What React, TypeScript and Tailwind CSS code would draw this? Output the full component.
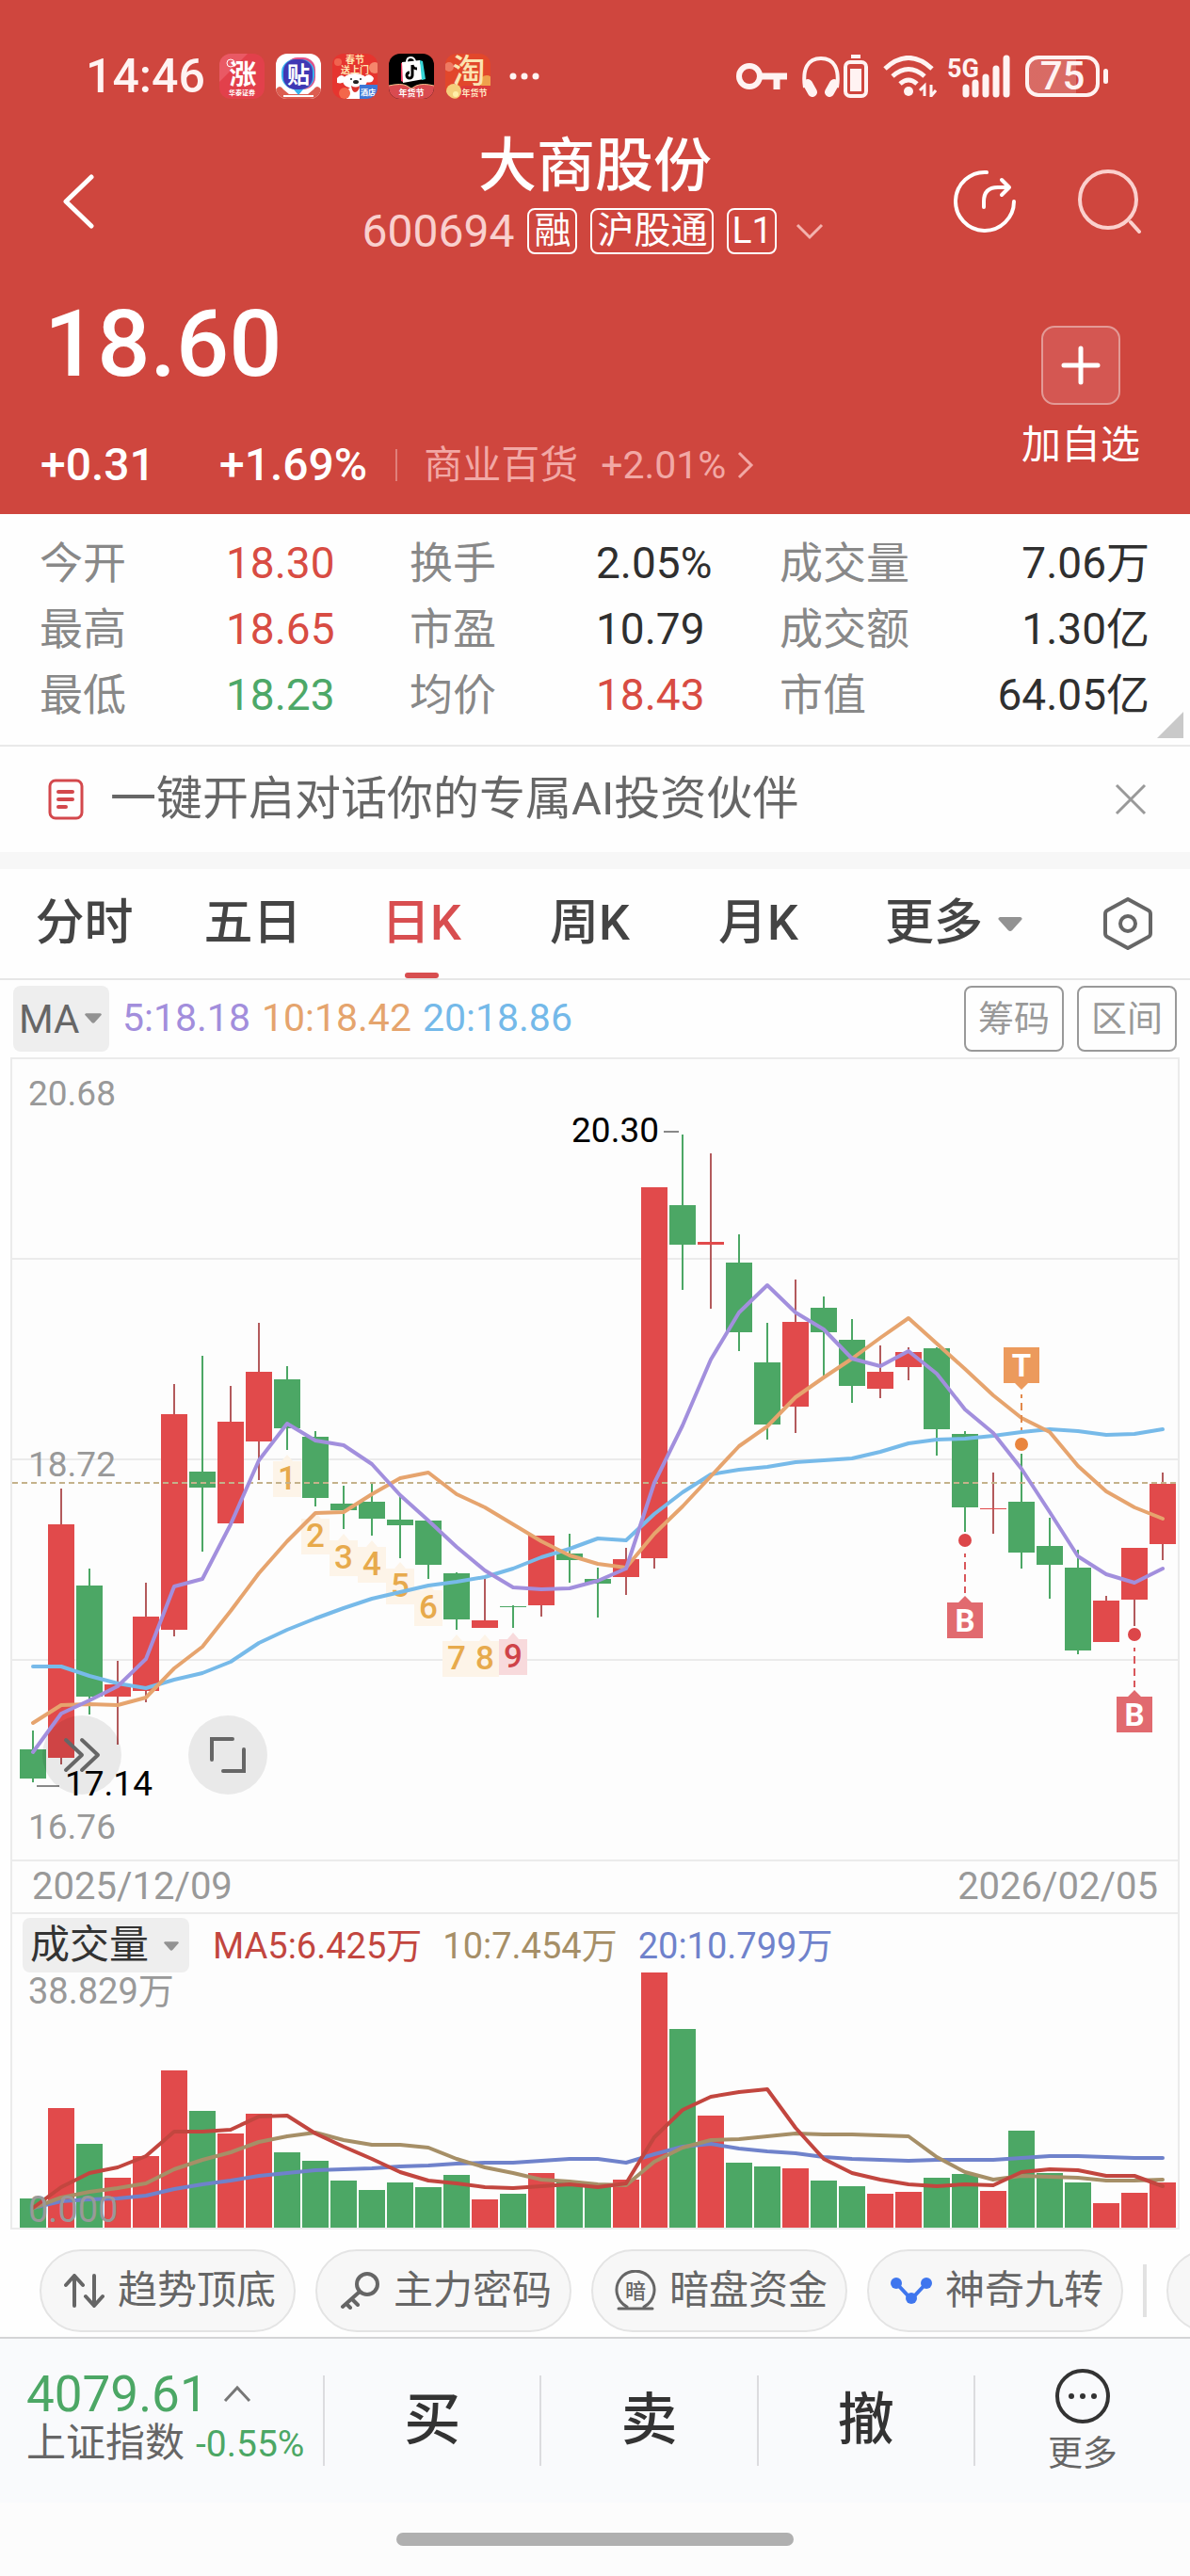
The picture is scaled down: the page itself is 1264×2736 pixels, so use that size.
import React from 'react';

type Candle = [up: 0 | 1, high: number, top: number, bottom: number, low: number];

const X0 = 35;
const STEP = 30;
const cx = (i: number) => X0 + STEP * i;
const RED = '#e14a4b';
const GREEN = '#4ca765';

const candles: Candle[] = [
  [0, 1838, 1858, 1889, 1893], [1, 1581, 1619, 1867, 1874], [0, 1666, 1684, 1802, 1821], [1, 1764, 1789, 1802, 1853],
  [1, 1681, 1717, 1796, 1808], [1, 1470, 1502, 1731, 1738], [0, 1440, 1563, 1580, 1648], [1, 1472, 1510, 1618, 1618],
  [1, 1405, 1457, 1531, 1572], [0, 1451, 1465, 1517, 1540], [0, 1520, 1526, 1591, 1600], [0, 1578, 1597, 1604, 1624],
  [0, 1576, 1595, 1613, 1631], [0, 1588, 1614, 1620, 1655], [0, 1615, 1615, 1662, 1677], [0, 1670, 1671, 1720, 1731],
  [1, 1677, 1721, 1729, 1729], [0, 1705, 1706, 1707, 1729], [1, 1631, 1631, 1705, 1717], [0, 1629, 1650, 1657, 1681],
  [0, 1665, 1677, 1682, 1718], [1, 1644, 1656, 1675, 1694], [1, 1261, 1261, 1655, 1666], [0, 1205, 1280, 1322, 1370],
  [1, 1225, 1319, 1322, 1390], [0, 1311, 1341, 1415, 1435], [0, 1405, 1447, 1513, 1529], [1, 1359, 1404, 1494, 1522],
  [0, 1377, 1389, 1415, 1462], [0, 1401, 1423, 1472, 1490], [1, 1429, 1457, 1475, 1485], [1, 1431, 1436, 1452, 1466],
  [0, 1431, 1432, 1518, 1546], [0, 1520, 1523, 1601, 1627], [1, 1564, 1602, 1603, 1629], [0, 1544, 1595, 1649, 1666],
  [0, 1612, 1642, 1662, 1698], [0, 1646, 1665, 1753, 1757], [1, 1695, 1700, 1744, 1744], [1, 1644, 1644, 1699, 1727],
  [1, 1564, 1576, 1640, 1657],
];

const ma5 = [1861, 1820, 1806, 1791, 1762, 1685, 1677, 1619, 1551, 1512, 1530, 1535, 1555, 1588, 1615, 1643, 1668, 1686, 1688, 1687, 1679, 1666, 1575, 1514, 1444, 1394, 1365, 1394, 1412, 1443, 1451, 1435, 1459, 1497, 1522, 1560, 1606, 1653, 1672, 1681, 1666];
const ma10 = [1830, 1811, 1810, 1811, 1803, 1772, 1749, 1711, 1671, 1637, 1607, 1606, 1587, 1570, 1564, 1587, 1601, 1619, 1637, 1652, 1661, 1665, 1629, 1600, 1568, 1536, 1515, 1484, 1463, 1443, 1421, 1400, 1427, 1454, 1482, 1506, 1521, 1557, 1584, 1601, 1613];
const ma20 = [1770, 1770, 1780, 1788, 1793, 1784, 1777, 1765, 1745, 1731, 1719, 1708, 1698, 1691, 1684, 1680, 1675, 1666, 1654, 1645, 1634, 1636, 1608, 1585, 1566, 1561, 1558, 1553, 1551, 1549, 1542, 1533, 1529, 1528, 1525, 1521, 1518, 1520, 1524, 1523, 1518];

const volumes = [2335, 2239, 2277, 2313, 2290, 2199, 2242, 2266, 2245, 2286, 2295, 2316, 2326, 2318, 2323, 2310, 2336, 2330, 2308, 2317, 2320, 2315, 2095, 2155, 2247, 2297, 2301, 2303, 2316, 2322, 2330, 2328, 2313, 2309, 2327, 2263, 2308, 2318, 2340, 2329, 2318];
const vol5 = [2345, 2323, 2308, 2302, 2290, 2264, 2264, 2262, 2248, 2247, 2266, 2280, 2293, 2307, 2316, 2319, 2323, 2324, 2322, 2320, 2323, 2319, 2270, 2241, 2227, 2222, 2219, 2260, 2293, 2308, 2315, 2320, 2322, 2320, 2321, 2307, 2304, 2305, 2311, 2311, 2322];
const vol10 = [2345, 2334, 2328, 2324, 2319, 2304, 2294, 2286, 2275, 2269, 2265, 2273, 2278, 2278, 2281, 2293, 2302, 2308, 2315, 2317, 2320, 2321, 2296, 2281, 2273, 2272, 2269, 2266, 2267, 2267, 2268, 2269, 2291, 2307, 2315, 2311, 2312, 2313, 2316, 2316, 2315];
const vol20 = [2345, 2338, 2336, 2335, 2332, 2325, 2320, 2316, 2311, 2308, 2305, 2304, 2303, 2301, 2300, 2298, 2297, 2297, 2295, 2293, 2293, 2297, 2288, 2280, 2277, 2282, 2285, 2287, 2291, 2293, 2294, 2295, 2294, 2294, 2294, 2292, 2290, 2290, 2291, 2292, 2292];

const turns: [label: string, index: number, bottom: number][] = [
  ['1', 9, 1590], ['2', 10, 1651], ['3', 11, 1674], ['4', 12, 1681], ['5', 13, 1704], ['6', 14, 1727], ['7', 15, 1781], ['8', 16, 1781], ['9', 17, 1779],
];

function Series({ data, color }: { data: number[]; color: string }) {
  return (
    <polyline
      points={data.map((y, i) => `${cx(i)},${y}`).join(' ')}
      fill="none"
      stroke={color}
      strokeWidth="4"
      strokeLinejoin="round"
      strokeLinecap="round"
    />
  );
}

function BuyTag({ index, y }: { index: number; y: number }) {
  const x = cx(index);
  return (
    <g>
      <circle cx={x} cy={y} r="8" fill="#fff" />
      <circle cx={x} cy={y} r="7" fill="#dc4649" />
      <path d={`M${x} ${y + 14}v42`} stroke="#d9575b" strokeWidth="2" strokeDasharray="8 5" strokeDashoffset="4" />
      <path d={`M${x - 19} ${y + 66}h12l7 -7l7 7h12v38h-38z`} fill="#e16a6f" />
      <text x={x} y={y + 97} textAnchor="middle" fontSize="33" fontWeight="700" fill="#fff">B</text>
    </g>
  );
}

function PriceChart() {
  return (
    <svg viewBox="13 1125 1238 850" className="block w-full" role="img" aria-label="日K线图">
      {[1337, 1550, 1763].map((y) => (
        <path key={y} d={`M13 ${y}h1238`} stroke="#ebebeb" strokeWidth="2" />
      ))}
      <g fontSize="37" fill="#999">
        <text x="30" y="1174">20.68</text>
        <text x="30" y="1568">18.72</text>
        <text x="30" y="1953">16.76</text>
      </g>
      {candles.map(([up, high, top, bottom, low], i) => (
        <g key={i}>
          <path d={`M${cx(i)} ${high}V${low}`} stroke={up ? '#b35a5c' : GREEN} strokeWidth="2" />
          <rect x={cx(i) - 14} y={top} width="28" height={bottom - top} fill={up ? RED : GREEN} />
        </g>
      ))}
      {turns.map(([label, index, bottom]) => {
        const hot = label === '9';
        const x = cx(index);
        return (
          <g key={label}>
            <path d={`M${x - 15} ${bottom - 38}h9l6 -7l6 7h9v38h-30z`} fill={hot ? '#f8dadc' : '#fdf4e8'} />
            <text x={x} y={bottom - 8} textAnchor="middle" fontSize="35" fontWeight="500" fill={hot ? '#cf4348' : '#e7aa4c'}>{label}</text>
          </g>
        );
      })}
      <path d="M13 1575H1251" stroke="#c4b28b" strokeWidth="2" strokeDasharray="6 4" />
      <Series data={ma20} color="#77bae9" />
      <Series data={ma10} color="#e6a46e" />
      <Series data={ma5} color="#a28fdd" />
      <BuyTag index={33} y={1636} />
      <BuyTag index={39} y={1736} />
      <g>
        <path d={`M${cx(35) - 19} 1431h38v38h-12l-7 7l-7 -7h-12z`} fill="#ec9a5c" />
        <text x={cx(35)} y="1462" textAnchor="middle" fontSize="33" fontWeight="700" fill="#fff">T</text>
        <path d={`M${cx(35)} 1481v38`} stroke="#e2894a" strokeWidth="2" strokeDasharray="8 5" strokeDashoffset="4" />
        <circle cx={cx(35)} cy="1534" r="7" fill="#e9853e" />
      </g>
      <g fontSize="37" fill="#000">
        <text x="700" y="1213" textAnchor="end">20.30</text>
        <text x="69" y="1907">17.14</text>
      </g>
      <path d="M705 1202h16M39 1897h24" stroke="#888" strokeWidth="2" />
    </svg>
  );
}

function VolumeChart() {
  return (
    <svg viewBox="13 2095 1238 271" className="block w-full overflow-visible" role="img" aria-label="成交量柱状图">
      {volumes.map((top, i) => (
        <rect key={i} x={cx(i) - 14} y={top} width="28" height={2366 - top} fill={candles[i][0] ? RED : GREEN} />
      ))}
      <Series data={vol20} color="#6f82cb" />
      <Series data={vol10} color="#a68f67" />
      <Series data={vol5} color="#c2463f" />
      <g fontSize="38" fill="#999">
        <text x="30" y="2128">38.829万</text>
        <text x="30" y="2360">0.000</text>
      </g>
    </svg>
  );
}

const clip = 'h-12 w-12 shrink-0 rounded-[12px]';

function StatusBar() {
  return (
    <div className="flex h-12 items-center pl-[91px] pr-[87px] text-[#fff3f2]">
      <span className="w-[142px] text-[50px] font-medium leading-[48px]">14:46</span>
      <div className="flex gap-3" aria-hidden="true">
        <svg viewBox="0 0 48 48" className={clip}>
          <rect width="48" height="48" fill="#e2404b" />
          <path d="M0 0H30L0 30z" fill="#ee6a75" opacity=".6" />
          <text x="25" y="33" textAnchor="middle" fontSize="29" fontWeight="700" fill="#fff">涨</text>
          <circle cx="12" cy="10" r="4" fill="none" stroke="#fff" strokeWidth="1" />
          <text x="24" y="44" textAnchor="middle" fontSize="7" fontWeight="700" fill="#fff">华泰证券</text>
        </svg>
        <svg viewBox="0 0 48 48" className={clip}>
          <rect width="48" height="48" fill="#fff" />
          <path d="M0 38q4 -6 8 0l6 5h20l6 -5q4 -6 8 0v10H0z" fill="#dc5d50" />
          <path d="M8 45h32" stroke="#fff" strokeWidth="2" />
          <rect x="10" y="4" width="32" height="34" rx="13" fill="#e0528b" />
          <path d="M6 20a14 14 0 0 1 14 -14h8a14 14 0 0 1 13 14v4a15 15 0 0 1 -12 14l-5 6l-5 -6a15 15 0 0 1 -13 -14z" fill="#37b3ee" />
          <rect x="8" y="6" width="31" height="32" rx="13" fill="#4038b4" />
          <text x="24" y="31" textAnchor="middle" fontSize="24" fontWeight="700" fill="#fff">贴</text>
        </svg>
        <svg viewBox="0 0 48 48" className={clip}>
          <rect width="48" height="48" fill="#e6352f" />
          <circle cx="45" cy="15" r="6" fill="#f6866c" />
          <circle cx="6" cy="9" r="4" fill="#f1634f" />
          <text x="24" y="10" textAnchor="middle" fontSize="10" fontWeight="700" fill="#ffe6b0">春节</text>
          <text x="24" y="21" textAnchor="middle" fontSize="10" fontWeight="700" fill="#ffe6b0">送上门</text>
          <ellipse cx="24" cy="29" rx="13" ry="8" fill="#fff" />
          <path d="M5 26q5 -6 9 0q-1 7 -9 5zM34 25q5 -6 10 1q-1 6 -8 4z" fill="#fff" />
          <path d="M16 38q8 -6 14 0v10H15z" fill="#fff" />
          <circle cx="20" cy="27" r="1" fill="#222" />
          <circle cx="30" cy="27" r="1" fill="#222" />
          <ellipse cx="25" cy="30" rx="3" ry="2" fill="#222" />
          <path d="M20 34q5 3 9 0q-1 7 -5 7q-3 0 -4 -7" fill="#d8332e" />
          <circle cx="13" cy="42" r="6" fill="#f4674a" />
          <rect x="29" y="33" width="19" height="15" fill="#3e77d6" />
          <text x="38" y="44" textAnchor="middle" fontSize="8" fontWeight="700" fill="#fff">酒店</text>
        </svg>
        <svg viewBox="0 0 48 48" className={clip}>
          <rect width="48" height="48" fill="#000" />
          <path d="M0 34q13 -3 19 0l5 3l5 -3q7 -3 19 0v14H0z" fill="#d94b50" />
          <path d="M0 34q13 -3 19 0l5 3l5 -3q7 -3 19 0" fill="none" stroke="#f7c08d" strokeWidth="1" />
          <path d="M13 10l3 -1l-1 21l-2 -1z" fill="#ef3b62" />
          <path d="M14 9l19 -2l4 20l-22 4z" fill="#fff" />
          <path d="M33 7l3 1l3 19l-4 1z" fill="#35d6d8" />
          <path d="M19 9q0 -5 4 -5t5 4" fill="none" stroke="#fff" strokeWidth="2" />
          <path d="M25 12v11a3 3 0 1 1 -3 -3M25 12q1 4 5 4" fill="none" stroke="#000" strokeWidth="3" />
          <text x="24" y="45" textAnchor="middle" fontSize="9" fontWeight="700" fill="#fff">年货节</text>
        </svg>
        <svg viewBox="0 0 48 48" className={clip}>
          <rect width="48" height="48" fill="#e2472b" />
          <circle cx="44" cy="30" r="7" fill="#efa14c" />
          <circle cx="4" cy="14" r="5" fill="#ef7a62" />
          <path d="M14 38q2 -4 8 -4h26v14H14z" fill="#dc3a3b" />
          <circle cx="9" cy="40" r="8" fill="#f5cf7c" />
          <circle cx="11" cy="43" r="3" fill="#fff0a8" />
          <text x="25" y="31" textAnchor="middle" fontSize="35" fontWeight="500" fill="#fbe3b0">淘</text>
          <text x="31" y="45" textAnchor="middle" fontSize="9" fontWeight="700" fill="#ffe9c4">年货节</text>
        </svg>
      </div>
      <svg viewBox="0 0 32 8" className="ml-5 h-2 w-8 fill-current" aria-hidden="true">
        <circle cx="4" cy="4" r="3.5" /><circle cx="16" cy="4" r="3.5" /><circle cx="28" cy="4" r="3.5" />
      </svg>
      <div className="ml-auto flex items-center">
        <svg viewBox="0 0 54 30" className="h-[30px] w-[54px]" fill="none" stroke="currentColor" aria-hidden="true">
          <circle cx="14" cy="15" r="11" strokeWidth="6" />
          <path d="M26 15h28M43 15v14" strokeWidth="7" />
        </svg>
        <svg viewBox="0 0 40 44" className="ml-4 h-11 w-10" fill="none" stroke="currentColor" aria-hidden="true">
          <path d="M3 34C0 14 6 3 20 3S40 14 37 34" strokeWidth="4" />
          <path d="M6 30l5 9M34 30l-5 9" strokeWidth="10" strokeLinecap="round" />
        </svg>
        <svg viewBox="0 0 26 46" className="ml-1 h-[46px] w-[26px]" aria-hidden="true">
          <path d="M8 2h10" stroke="currentColor" strokeWidth="4" />
          <rect x="2" y="8" width="22" height="36" rx="5" fill="none" stroke="currentColor" strokeWidth="4" />
          <rect x="7" y="15" width="12" height="24" fill="currentColor" />
        </svg>
        <svg viewBox="0 0 57 44" className="ml-4 h-11 w-[57px]" fill="none" stroke="currentColor" aria-hidden="true">
          <path d="M2 14Q27 -9 52 14M10 22Q27 7 44 22M18 30Q27 22 36 30" strokeWidth="5" />
          <circle cx="27" cy="38" r="5" fill="currentColor" stroke="none" />
          <path d="M44 43V32l-5 5M51 31v12l5 -6" strokeWidth="3" />
        </svg>
        <svg viewBox="0 0 66 46" className="ml-3 h-[46px] w-[66px]" aria-hidden="true">
          <text x="-1" y="24" fontSize="27" fontWeight="700" fill="currentColor">5G</text>
          <path d="M19 35v7M29 30v12M40 24v18M51 15v27M62 4v38" stroke="currentColor" strokeWidth="7" strokeLinecap="round" />
        </svg>
        <div className="ml-4 flex h-[44px] w-[79px] items-center justify-center rounded-[14px] border-4 border-current bg-linear-to-r from-white/20 from-70% to-transparent to-70% text-[42px] font-medium leading-none">75</div>
        <div className="ml-1 h-4 w-[5px] rounded-full bg-current" />
      </div>
    </div>
  );
}

function Header() {
  return (
    <header className="bg-[#cf463e] pb-7 pt-[57px] text-white">
      <StatusBar />
      <div className="mt-9 grid grid-cols-[1fr_auto_1fr] items-center">
        <button aria-label="返回" className="ml-[66px] justify-self-start">
          <svg viewBox="0 0 34 58" className="h-[58px] w-[34px]" fill="none" stroke="currentColor" strokeWidth="5" strokeLinecap="round" strokeLinejoin="round">
            <path d="M31 3L4 29l27 26" />
          </svg>
        </button>
        <div className="flex flex-col items-center pb-[17px]">
          <h1 className="text-[62px] font-medium leading-[72px]">大商股份</h1>
          <div className="mt-2 flex h-[49px] items-center text-[39px] leading-[45px]">
            <span className="mr-[14px] text-[48px] text-[#f9d0ce]">600694</span>
            <span className="mr-[14px] rounded-lg border-2 px-[5px]">融</span>
            <span className="mr-[14px] rounded-lg border-2 px-[5px]">沪股通</span>
            <span className="rounded-lg border-2 px-[3px]">L1</span>
            <button aria-label="展开" className="ml-5 mr-1 text-[#f3b3ae]">
              <svg viewBox="0 0 30 18" className="h-[18px] w-[30px]" fill="none" stroke="currentColor" strokeWidth="3">
                <path d="M2 2l13 13L28 2" />
              </svg>
            </button>
          </div>
        </div>
        <div className="flex gap-[66px] justify-self-end pr-[51px]">
          <button aria-label="分享">
            <svg viewBox="0 0 66 68" className="h-[68px] w-[66px]" fill="none" stroke="currentColor" strokeWidth="4" strokeLinecap="round" strokeLinejoin="round">
              <path d="M35 3A31 31 0 1 0 64 34" />
              <path d="M32 40V34Q32 19 47 19H58M51 11l8 8l-8 8" />
            </svg>
          </button>
          <button aria-label="搜索" className="text-[#fbd0cd]">
            <svg viewBox="0 0 68 68" className="h-[68px] w-[68px]" fill="none" stroke="currentColor" strokeWidth="4" strokeLinecap="round">
              <circle cx="32" cy="32" r="30" />
              <path d="M56 56l9 10" />
            </svg>
          </button>
        </div>
      </div>
      <div className="flex justify-between pl-[43px] pr-[53px]">
        <div className="pt-7">
          <div className="pl-1 text-[99px] font-medium leading-[100px]">18.60</div>
          <div className="mt-[55px] flex h-12 items-center text-[48px] font-medium leading-[48px]">
            <span className="w-[190px]">+0.31</span>
            <span>+1.69%</span>
            <span className="ml-[30px] h-[34px] w-[2px] bg-[#e0807b]" />
            <a href="#sector" className="ml-7 flex items-center text-[41px] font-normal text-[#f2a8a5]">
              商业百货
              <span className="ml-6">+2.01%</span>
              <svg viewBox="0 0 18 30" className="ml-3 h-[30px] w-[18px]" fill="none" stroke="currentColor" strokeWidth="3">
                <path d="M2 2l13 13L2 28" />
              </svg>
            </a>
          </div>
        </div>
        <button className="flex flex-col items-center pt-[59px] text-[42px] leading-[54px]">
          <span className="mb-4 flex h-[84px] w-[84px] items-center justify-center rounded-[14px] border-2 border-[#e39a96] bg-[#d45752]">
            <svg viewBox="0 0 42 42" className="h-[42px] w-[42px]" stroke="currentColor" strokeWidth="5" strokeLinecap="round" aria-hidden="true">
              <path d="M3 21h36M21 3v36" />
            </svg>
          </span>
          加自选
        </button>
      </div>
    </header>
  );
}

const red = 'text-[#d84c43]';
const green = 'text-[#4da868]';
const dark = 'text-[#2f2f2f]';

const stats: [string, string, string][][] = [
  [['今开', '18.30', red], ['最高', '18.65', red], ['最低', '18.23', green]],
  [['换手', '2.05%', dark], ['市盈', '10.79', dark], ['均价', '18.43', red]],
  [['成交量', '7.06万', dark], ['成交额', '1.30亿', dark], ['市值', '64.05亿', dark]],
];

function Stats() {
  return (
    <section className="relative grid grid-cols-3 border-b-2 border-[#e9e9e9] pb-[18px] pl-[42px] pr-[43px] pt-[17px] text-[46px] leading-[70px]">
      {stats.map((col, c) => (
        <dl key={c}>
          {col.map(([label, value, tone]) => (
            <div key={label} className={c === 2 ? 'flex justify-between' : 'flex'}>
              <dt className={c === 2 ? 'text-[#888]' : 'w-[198px] text-[#888]'}>{label}</dt>
              <dd className={tone}>{value}</dd>
            </div>
          ))}
        </dl>
      ))}
      <svg viewBox="0 0 28 28" className="absolute bottom-[7px] right-[7px] h-7 w-7" aria-hidden="true">
        <path d="M28 0V28H0z" fill="#c9c9c9" />
      </svg>
    </section>
  );
}

const Caret = ({ className }: { className: string }) => (
  <svg viewBox="0 0 24 14" className={className} aria-hidden="true">
    <path d="M2 0H22Q25 1 23 3L14 13Q12 15 10 13L1 3Q-1 1 2 0z" fill="#929292" />
  </svg>
);

function Tabs() {
  return (
    <div role="tablist" className="grid h-[118px] grid-cols-[repeat(5,179fr)_369fr] border-b-2 border-[#e6e6e6] text-[52px] font-medium leading-[60px] text-[#444]">
      <button role="tab" aria-selected="false">分时</button>
      <button role="tab" aria-selected="false">五日</button>
      <button role="tab" aria-selected="true" className="relative text-[#d84e50]">
        日K
        <span className="absolute bottom-0 left-1/2 h-[6px] w-9 -translate-x-1/2 rounded-full bg-[#d84e50]" />
      </button>
      <button role="tab" aria-selected="false">周K</button>
      <button role="tab" aria-selected="false">月K</button>
      <div className="flex items-center justify-between pl-[45px] pr-[40px]">
        <button className="flex h-full items-center">
          更多
          <Caret className="ml-4 h-[15px] w-[26px]" />
        </button>
        <button aria-label="设置">
          <svg viewBox="0 0 52 56" className="h-14 w-[52px]" fill="none" stroke="#666" strokeWidth="4" strokeLinejoin="round">
            <path d="M26 2L48 14Q50 15 50 18V38Q50 41 48 42L26 54L4 42Q2 41 2 38V18Q2 15 4 14z" />
            <circle cx="26" cy="28" r="8" />
          </svg>
        </button>
      </div>
    </div>
  );
}

const outlined = 'h-[70px] w-[106px] rounded-lg border-2 border-[#999] text-[38px] leading-[66px] text-[#999]';

function Indicators() {
  return (
    <div className="flex h-[82px] items-center pl-[14px] pr-[14px] text-[41px]">
      <div className="relative">
        <select aria-label="主图指标" className="h-[70px] w-[102px] appearance-none rounded-lg bg-[#eee] pl-[6px] text-[42px] text-[#666]">
          <option>MA</option>
        </select>
        <Caret className="pointer-events-none absolute right-2 top-[29px] h-[11px] w-[18px]" />
      </div>
      <div className="ml-[14px] flex gap-3">
        <span className="text-[#a28edc]">5:18.18</span>
        <span className="text-[#e5a46d]">10:18.42</span>
        <span className="text-[#74b9e9]">20:18.86</span>
      </div>
      <div className="ml-auto flex gap-[14px]">
        <button className={outlined}>筹码</button>
        <button className={outlined}>区间</button>
      </div>
    </div>
  );
}

const round = 'absolute flex h-[84px] w-[84px] items-center justify-center rounded-full bg-black/8';

function Charts() {
  return (
    <section className="mx-[11px] border-2 border-[#ebebeb] bg-[#fdfdfd]">
      <div className="relative">
        <PriceChart />
        <button aria-label="快进" className={`${round} bottom-[69px] left-8`}>
          <svg viewBox="0 0 40 38" className="h-[38px] w-10" fill="none" stroke="#666" strokeWidth="4" strokeLinecap="round" strokeLinejoin="round">
            <path d="M3 3l17 16L3 35M20 3l17 16L20 35" />
          </svg>
        </button>
        <button aria-label="全屏" className={`${round} bottom-[69px] left-[187px]`}>
          <svg viewBox="0 0 40 40" className="h-10 w-10" fill="none" stroke="#666" strokeWidth="4" strokeLinecap="round">
            <path d="M3 25V3H25M37 14V37H15" />
          </svg>
        </button>
      </div>
      <div className="flex items-center justify-between border-y-2 border-[#ebebeb] px-[21px] text-[40px] leading-[54px] text-[#999]">
        <time>2025/12/09</time>
        <time>2026/02/05</time>
      </div>
      <div className="flex h-[62px] items-end text-[38px] leading-[56px]">
        <div className="relative ml-[11px] mr-[25px]">
          <select aria-label="副图指标" className="block h-[58px] w-[177px] appearance-none rounded-lg bg-[#eee] pl-2 text-[42px] leading-[58px] text-[#333]">
            <option>成交量</option>
          </select>
          <Caret className="pointer-events-none absolute right-[11px] top-[25px] h-[10px] w-4" />
        </div>
        <span className="mr-[22px] text-[#c2463f]">MA5:6.425万</span>
        <span className="mr-[22px] text-[#a68f67]">10:7.454万</span>
        <span className="text-[#6f82cb]">20:10.799万</span>
      </div>
      <VolumeChart />
    </section>
  );
}

const pill = 'flex h-[88px] w-[272px] shrink-0 items-center gap-[14px] rounded-full border-2 border-[#e4e4e4] bg-[#f7f7f7] pl-[23px] text-[42px] leading-[60px] whitespace-nowrap';

function Tools() {
  return (
    <nav className="flex items-center gap-[21px] overflow-hidden pb-[5px] pl-[42px] pt-[21px] text-[#666]">
      <button className={pill}>
        <svg viewBox="0 0 44 36" className="h-9 w-11 shrink-0" fill="none" stroke="currentColor" strokeWidth="4" strokeLinecap="round" strokeLinejoin="round" aria-hidden="true">
          <path d="M12 34V3M3 12l9 -10l9 10M33 2v31M24 24l9 10l9 -10" />
        </svg>
        趋势顶底
      </button>
      <button className={pill}>
        <svg viewBox="0 0 44 40" className="h-10 w-11 shrink-0" fill="none" stroke="currentColor" strokeWidth="4" strokeLinecap="round" aria-hidden="true">
          <circle cx="30" cy="13" r="11" />
          <path d="M22 21L4 37M14 29l6 6M8 34l4 4" />
        </svg>
        主力密码
      </button>
      <button className={pill}>
        <svg viewBox="0 0 44 44" className="h-11 w-11 shrink-0" aria-hidden="true">
          <path d="M13 39A20 20 0 1 1 31 39M4 41h36" fill="none" stroke="currentColor" strokeWidth="3" strokeLinecap="round" />
          <text x="22" y="30" textAnchor="middle" fontSize="22" fontWeight="500" fill="currentColor">暗</text>
        </svg>
        暗盘资金
      </button>
      <button className={pill}>
        <svg viewBox="0 0 44 30" className="h-[30px] w-11 shrink-0" fill="#3f76ee" aria-hidden="true">
          <path d="M6 7L22 24L38 7" fill="none" stroke="#3f76ee" strokeWidth="4" />
          <circle cx="6" cy="7" r="6" /><circle cx="38" cy="7" r="6" /><circle cx="22" cy="23" r="6" />
        </svg>
        神奇九转
      </button>
      <span className="h-14 w-1 shrink-0 bg-[#e2e2e2]" />
      <button aria-label="更多工具" className={pill} />
    </nav>
  );
}

const trade = 'h-24 flex-1 border-l-2 border-[#dcdcdf] text-[60px] font-medium leading-[96px] text-[#333]';

function BottomBar() {
  return (
    <footer className="border-t-2 border-[#d4d4d6] bg-[#f9fafc]">
      <div className="flex h-[174px] items-center">
        <button className="w-[343px] shrink-0 pb-[6px] pl-7 text-left">
          <span className="flex items-center text-[53px] leading-[54px] text-[#4ca765]">
            4079.61
            <svg viewBox="0 0 30 19" className="ml-4 h-[19px] w-[30px]" fill="none" stroke="#777" strokeWidth="3" aria-hidden="true">
              <path d="M2 17L15 3L28 17" />
            </svg>
          </span>
          <span className="flex items-baseline text-[42px] leading-[50px] text-[#666]">
            上证指数
            <span className="ml-3 text-[39px] text-[#4ca765]">-0.55%</span>
          </span>
        </button>
        <button className={trade}>买</button>
        <button className={trade}>卖</button>
        <button className={trade}>撤</button>
        <button className="flex h-24 flex-1 flex-col items-center justify-center border-l-2 border-[#dcdcdf] text-[37px] leading-[48px] text-[#666]">
          <svg viewBox="0 0 60 60" className="mb-2 mt-1 h-[60px] w-[60px] shrink-0" aria-hidden="true">
            <circle cx="30" cy="30" r="27" fill="none" stroke="#333" strokeWidth="4" />
            <g fill="#333"><circle cx="18" cy="30" r="3" /><circle cx="30" cy="30" r="3" /><circle cx="42" cy="30" r="3" /></g>
          </svg>
          更多
        </button>
      </div>
      <div className="bg-[#fcfcfc] pb-8 pt-8">
        <div className="mx-auto h-[14px] w-1/3 rounded-full bg-[#b0b0b0]" />
      </div>
    </footer>
  );
}

export default function App() {
  return (
    <div className="w-full bg-[#fefefe] font-['Roboto','Noto_Sans_CJK_SC',sans-serif]">
      <Header />
      <main>
        <Stats />
        <div className="flex h-[112px] items-center pl-[51px] pr-[46px] text-[49px] leading-[60px] text-[#666]">
          <svg viewBox="0 0 38 44" className="mr-7 h-11 w-[38px]" fill="none" stroke="#d3484c" strokeWidth="3" strokeLinecap="round" aria-hidden="true">
            <rect x="2" y="2" width="34" height="40" rx="6" />
            <path d="M11 14h15M11 22h15M11 30h8" strokeWidth="4" />
          </svg>
          <a href="#ai">一键开启对话你的专属AI投资伙伴</a>
          <button aria-label="关闭" className="ml-auto">
            <svg viewBox="0 0 34 34" className="h-[34px] w-[34px]" stroke="#999" strokeWidth="3">
              <path d="M2 2l30 30M32 2L2 32" />
            </svg>
          </button>
        </div>
        <div className="h-[18px] bg-[#f7f7f7]" />
        <Tabs />
        <Indicators />
        <Charts />
        <Tools />
      </main>
      <BottomBar />
    </div>
  );
}
